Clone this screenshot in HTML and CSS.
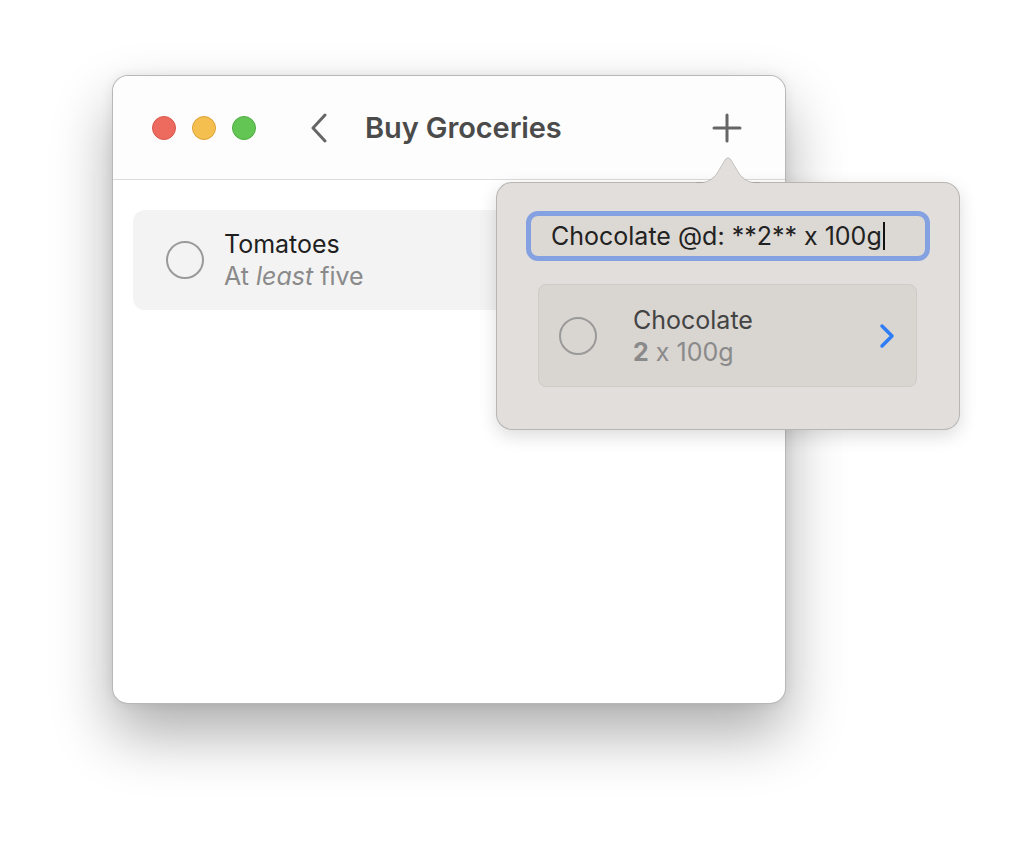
FILE: index.html
```html
<!DOCTYPE html>
<html lang="en">
<head>
    <meta charset="UTF-8">
    <meta name="viewport" content="width=device-width, initial-scale=1.0">
    <title>Buy Groceries</title>
    <link rel="stylesheet" href="styles.css">
</head>
<body>

    <div class="window">
        <!-- Title bar -->
        <div class="titlebar">
            <div class="lights">
                <span class="light red"></span>
                <span class="light yellow"></span>
                <span class="light green"></span>
            </div>
            <svg class="back" width="20" height="30" viewBox="0 0 20 30">
                <path d="M16 2 L4 15 L16 28" fill="none" stroke="#666" stroke-width="3" stroke-linecap="round" stroke-linejoin="round"/>
            </svg>
            <h1 class="title">Buy Groceries</h1>
            <svg class="add" width="30" height="30" viewBox="0 0 30 30">
                <path d="M15 2 V28 M2 15 H28" fill="none" stroke="#666" stroke-width="3" stroke-linecap="round"/>
            </svg>
        </div>

        <!-- List -->
        <div class="content">
            <div class="item">
                <span class="check"></span>
                <div class="item-text">
                    <div class="item-name">Tomatoes</div>
                    <div class="item-note">At <em>least</em> five</div>
                </div>
            </div>
        </div>

        <!-- New item popover -->
        <div class="popover">
            <svg class="popover-arrow" width="64" height="28" viewBox="0 0 64 28">
                <path d="M0 27 C10 27 14 25 20 19 L29 4 C31 1 33 1 35 4 L44 19 C50 25 54 27 64 27" fill="#e1dedb" stroke="rgba(0,0,0,0.18)" stroke-width="1"/>
                <rect x="0" y="27" width="64" height="2" fill="#e1dedb"/>
            </svg>
            <div class="field">
                <span class="field-text">Chocolate @d: **2** x 100g</span><span class="caret"></span>
            </div>
            <div class="preview">
                <span class="check"></span>
                <div class="item-text">
                    <div class="preview-name">Chocolate</div>
                    <div class="item-note"><b>2</b> x 100g</div>
                </div>
                <svg class="more" width="18" height="26" viewBox="0 0 18 26">
                    <path d="M4 3 L14 13 L4 23" fill="none" stroke="#2f7cf6" stroke-width="3.5" stroke-linecap="round" stroke-linejoin="round"/>
                </svg>
            </div>
        </div>
    </div>

</body>
</html>
```

FILE: styles.css
```css
html {
    height: 100%;
}

body {
    font-family: Inter, "Noto Sans", sans-serif;
    margin: 0;
    min-height: 100%;
    padding: 75px 0 0 112px;
    box-sizing: border-box;
    background-color: #ffffff;
}

.window {
    position: relative;
    width: 674px;
    height: 629px;
    box-sizing: border-box;
    background-color: white;
    border: 1px solid rgba(0, 0, 0, 0.28);
    border-radius: 16px;
    box-shadow: 0 30px 60px rgba(0, 0, 0, 0.32), 0 0 12px rgba(0, 0, 0, 0.08);
}

.titlebar {
    display: flex;
    align-items: center;
    height: 104px;
    padding: 0 0 0 39px;
    background-color: #fdfdfd;
    border-bottom: 1px solid #dcdcdc;
    border-radius: 16px 16px 0 0;
    box-sizing: border-box;
}

.lights {
    display: flex;
    gap: 16px;
}

.light {
    width: 24px;
    height: 24px;
    border-radius: 50%;
    box-sizing: border-box;
}

.red {
    background-color: #ed6a5e;
    border: 1px solid #d8574b;
}

.yellow {
    background-color: #f5bf4f;
    border: 1px solid #dca33a;
}

.green {
    background-color: #62c554;
    border: 1px solid #4fae41;
}

.back {
    margin-left: 53px;
}

.title {
    margin: 0 0 0 36px;
    font-size: 29px;
    font-weight: 600;
    color: #4b4b4b;
    letter-spacing: -0.1px;
}

.add {
    margin-left: auto;
    margin-right: 43px;
}

.content {
    padding: 30px 20px;
}

.item {
    display: flex;
    align-items: center;
    height: 100px;
    padding-left: 33px;
    background-color: #f3f3f3;
    border-radius: 12px;
}

.check {
    flex: none;
    width: 38px;
    height: 38px;
    border: 2.5px solid #9a9a9a;
    border-radius: 50%;
    box-sizing: border-box;
}

.item-text {
    margin-left: 20px;
    line-height: 32px;
    font-size: 25px;
}

.item-name {
    color: #1f1f1f;
}

.item-note {
    color: #8a8a8a;
}

.item-note b {
    font-weight: 700;
}

.popover {
    position: absolute;
    left: 383px;
    top: 106px;
    width: 464px;
    height: 248px;
    box-sizing: border-box;
    padding: 28px 29px 0 29px;
    background-color: #e1dedb;
    border: 1px solid rgba(0, 0, 0, 0.18);
    border-radius: 16px;
    box-shadow: 0 6px 18px rgba(0, 0, 0, 0.14);
}

.popover-arrow {
    position: absolute;
    left: 199px;
    top: -27px;
}

.field {
    display: flex;
    align-items: center;
    height: 50px;
    padding-left: 20px;
    box-sizing: border-box;
    background-color: #dcd8d4;
    border: 5px solid #84a2e2;
    border-radius: 12px;
    font-size: 25px;
    color: #222;
}

.caret {
    width: 2px;
    height: 28px;
    margin-left: 1px;
    background-color: #111;
}

.preview {
    display: flex;
    align-items: center;
    height: 103px;
    margin: 23px 13px 0 12px;
    padding: 0 20px 0 20px;
    box-sizing: border-box;
    background-color: #d9d5d1;
    border: 1px solid #cfcbc7;
    border-radius: 8px;
}

.preview .item-text {
    margin-left: 36px;
}

.preview-name {
    color: #444;
}

.more {
    margin-left: auto;
}
```
